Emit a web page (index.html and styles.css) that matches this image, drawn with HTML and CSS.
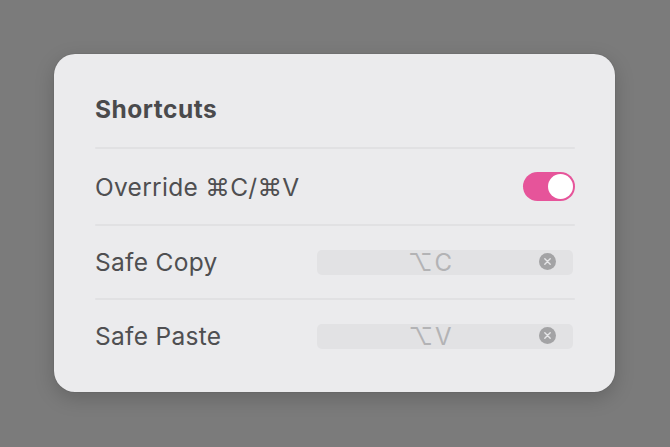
FILE: index.html
```html
<!DOCTYPE html>
<html>
<head>
<meta charset="utf-8">
<link rel="stylesheet" href="styles.css">
</head>
<body>
<div class="card">
  <div class="header">Shortcuts</div>
  <div class="divider"></div>
  <div class="row row-first">
    <span class="label">Override ⌘C/⌘V</span>
    <div class="toggle"><div class="knob"></div></div>
  </div>
  <div class="divider"></div>
  <div class="row">
    <span class="label">Safe Copy</span>
    <div class="keyfield">
      <span class="keys">⌥C</span>
      <span class="clear"><svg width="17" height="17" viewBox="0 0 17 17"><circle cx="8.5" cy="8.5" r="8.5" fill="#a3a3a5"/><path d="M5.8 5.8 L11.2 11.2 M11.2 5.8 L5.8 11.2" stroke="#e6e6e8" stroke-width="1.4" stroke-linecap="round"/></svg></span>
    </div>
  </div>
  <div class="divider"></div>
  <div class="row">
    <span class="label">Safe Paste</span>
    <div class="keyfield">
      <span class="keys">⌥V</span>
      <span class="clear"><svg width="17" height="17" viewBox="0 0 17 17"><circle cx="8.5" cy="8.5" r="8.5" fill="#a3a3a5"/><path d="M5.8 5.8 L11.2 11.2 M11.2 5.8 L5.8 11.2" stroke="#e6e6e8" stroke-width="1.4" stroke-linecap="round"/></svg></span>
    </div>
  </div>
</div>
</body>
</html>
```
FILE: styles.css
```css
html, body {
  margin: 0;
  padding: 0;
}
body {
  width: 670px;
  height: 447px;
  background: #7b7b7b;
  font-family: Inter, "Noto Sans", "DejaVu Sans", sans-serif;
  overflow: hidden;
}
.card {
  margin: 54px 0 0 54px;
  width: 561px;
  height: 338px;
  box-sizing: border-box;
  padding: 0 40px 0 41px;
  background: #ebebed;
  border-radius: 21px;
  box-shadow: 0 6px 20px rgba(0, 0, 0, 0.18), 0 0 1px rgba(0,0,0,0.4);
  display: flex;
  flex-direction: column;
}
.header {
  padding-top: 40px;
  height: 30px;
  line-height: 30px;
  padding-bottom: 23px;
  font-size: 24.5px;
  font-weight: 650;
  letter-spacing: 0.5px;
  color: #4a4a4c;
}
.divider {
  height: 2px;
  background: #e1e1e3;
  border-radius: 1px;
}
.row {
  height: 72px;
  display: flex;
  align-items: center;
  justify-content: space-between;
}
.row-first {
  height: 75px;
}
.label {
  font-size: 24.5px;
  color: #4f4f51;
  letter-spacing: 0.3px;
}
.toggle {
  width: 52px;
  height: 29px;
  border-radius: 15px;
  background: #e6549a;
  box-sizing: border-box;
  padding: 2px;
  display: flex;
  justify-content: flex-end;
}
.knob {
  width: 25px;
  height: 25px;
  border-radius: 50%;
  background: #ffffff;
}
.keyfield {
  width: 256px;
  height: 25px;
  margin-right: 2px;
  border-radius: 5px;
  background: #e2e2e4;
  display: flex;
  align-items: center;
  position: relative;
}
.keys {
  flex: 1;
  text-align: center;
  font-size: 24px;
  color: #b3b3b5;
  letter-spacing: 2px;
  padding-right: 28px;
}
.clear {
  position: absolute;
  right: 17px;
  top: 3px;
  height: 17px;
  width: 17px;
  display: flex;
}
```
